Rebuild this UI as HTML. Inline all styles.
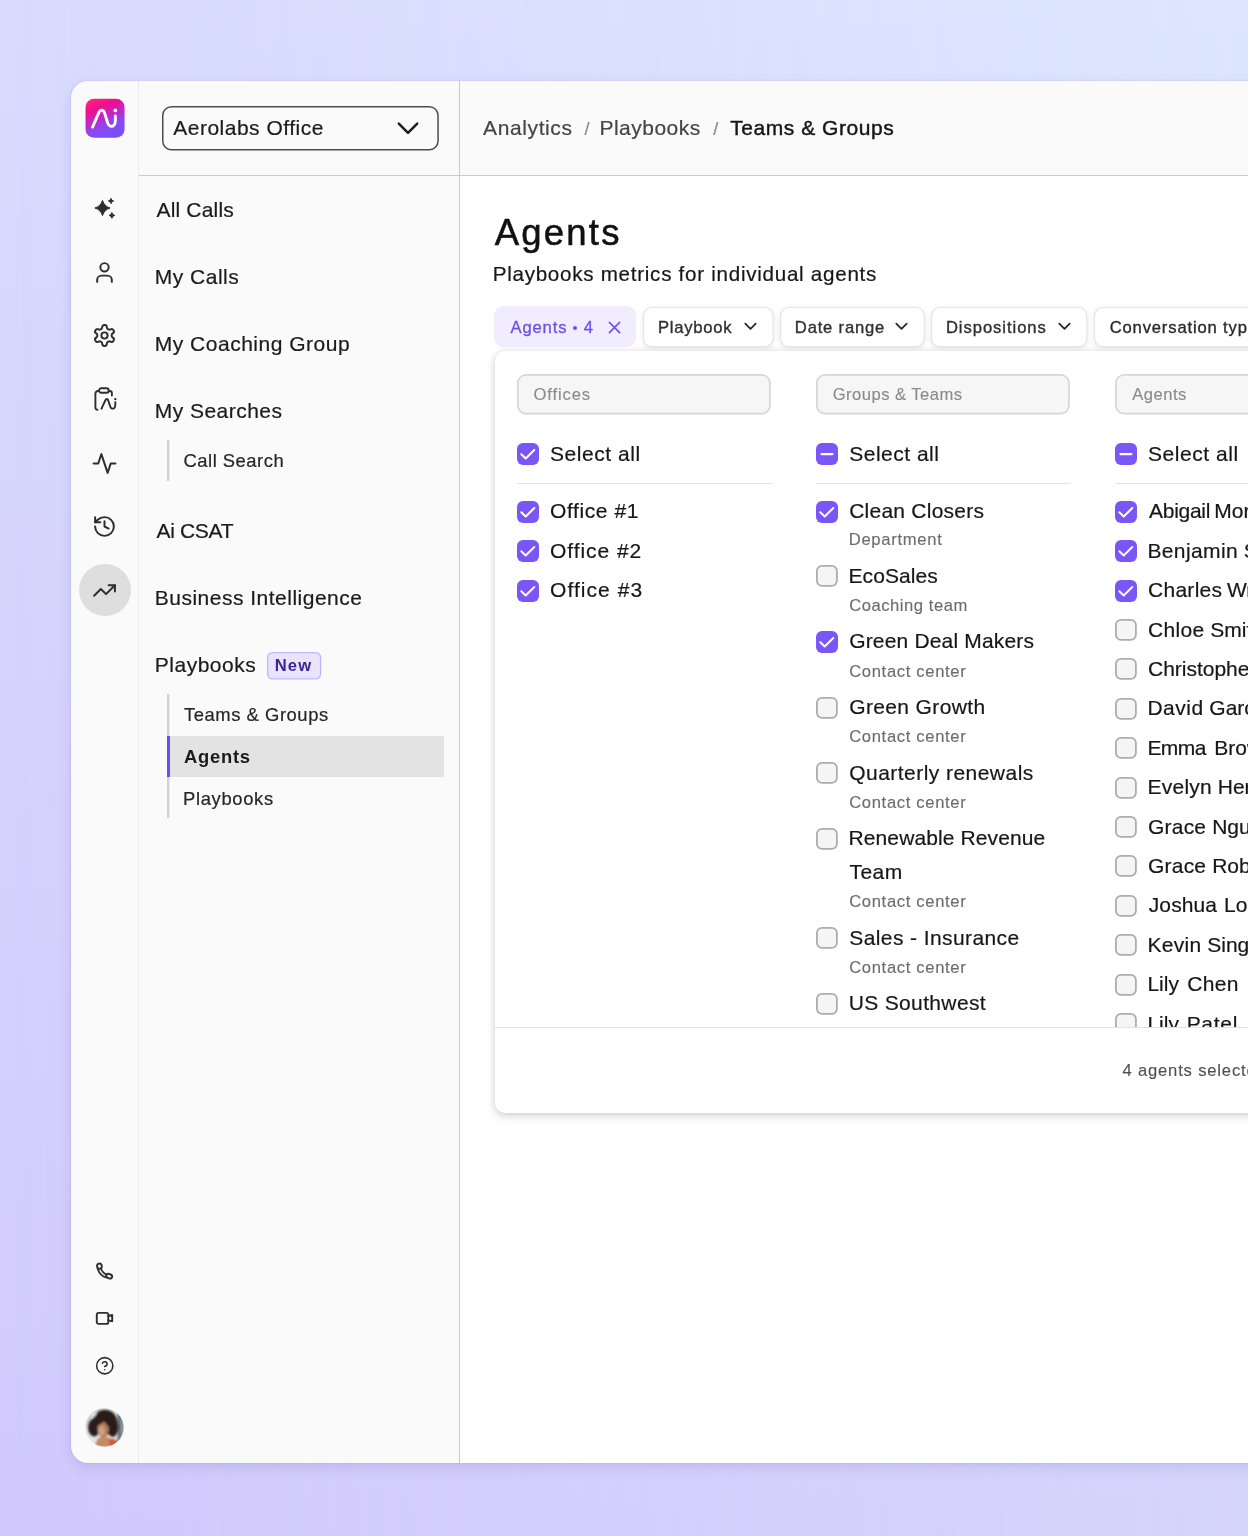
<!DOCTYPE html>
<html lang="en">
<head>
<meta charset="utf-8">
<title>Agents – Playbooks</title>
<style>
*{box-sizing:border-box;margin:0;padding:0}
html,body{width:1248px;height:1536px;overflow:hidden}
body{position:relative;font-family:"Liberation Sans",sans-serif;color:#1c1c1c;background:linear-gradient(to bottom,#d9dbfd 0%,#d5d2fd 50%,#d2c9fc 100%)}
.bg2{position:absolute;left:0;top:0;width:1248px;height:1536px;background:linear-gradient(to bottom,#dde6fe 0%,#d9dcfd 50%,#d5d4fc 100%);-webkit-mask-image:linear-gradient(to right,transparent 0%,#000 100%);mask-image:linear-gradient(to right,transparent 0%,#000 100%)}
.win{position:absolute;left:70.5px;top:80.5px;width:1300px;height:1382px;background:#fafafa;border-radius:17px;box-shadow:0 5px 13px rgba(70,60,150,.13),0 0 3px rgba(70,60,150,.13);overflow:hidden}
.abs{position:absolute}
.t{position:absolute;white-space:nowrap;line-height:24px;font-size:20px}
.vline{position:absolute;width:1px;background:#dcdcdc}
.hline{position:absolute;height:1px;background:#cbcbcb}
svg{position:absolute;overflow:visible}
.ic{fill:none;stroke:#2e2e2e;stroke-width:1.9;stroke-linecap:round;stroke-linejoin:round}
</style>
</head>
<body>
<div class="bg2"></div>
<div id="L" style="position:absolute;left:0;top:0;width:1248px;height:1536px;overflow:hidden;will-change:transform">
<div class="win"></div>

<!-- structural lines -->
<div class="vline" style="left:138px;top:81px;height:1382px;background:#eaeaea"></div>
<div class="vline" style="left:459px;top:81px;height:1382px;background:#c9c9c9"></div>
<div class="hline" style="left:139px;top:175px;width:1110px"></div>
<div class="abs" style="left:460px;top:176px;width:800px;height:1286.5px;background:#fff"></div>

<!--RAIL-->
<!-- logo -->
<svg style="left:85px;top:98px" width="39" height="39" viewBox="-0.55 -0.7 39 39">
  <defs>
    <linearGradient id="lg" x1="0.2" y1="0" x2="0.62" y2="1">
      <stop offset="0" stop-color="#ff2272"/>
      <stop offset="0.25" stop-color="#ee0f93"/>
      <stop offset="0.5" stop-color="#c128c4"/>
      <stop offset="0.72" stop-color="#8a48f2"/>
      <stop offset="1" stop-color="#7650fb"/>
    </linearGradient>
  </defs>
  <rect x="0" y="0" width="39" height="39" rx="8.5" fill="url(#lg)"/>
  <path d="M7 28.4 L13.4 13.6 C14.7 10.7 17.9 10.8 18.9 13.9 L22.2 24.4 C23.2 27.7 26.4 28.6 28.4 26.5 C29.5 25.3 29.8 23.8 29.8 21.8 L29.8 17.2" fill="none" stroke="#fff" stroke-width="2.9" stroke-linecap="round" stroke-linejoin="round"/>
  <circle cx="29.8" cy="11.7" r="1.85" fill="#fff"/>
</svg>

<!-- sparkles -->
<svg style="left:93px;top:197px" width="24" height="23" viewBox="0 0 24 23">
  <path d="M9.5 3.4000000000000004 Q11.2 9.3 17.1 11 Q11.2 12.7 9.5 18.6 Q7.8 12.7 1.9000000000000004 11 Q7.8 9.3 9.5 3.4000000000000004Z" fill="#2d2d2d" stroke="#2d2d2d" stroke-width="1" stroke-linejoin="round"/>
  <path d="M18 1.2999999999999998 Q18.35 3.65 20.7 4 Q18.35 4.35 18 6.7 Q17.65 4.35 15.3 4 Q17.65 3.65 18 1.2999999999999998Z" fill="#2d2d2d" stroke="#2d2d2d" stroke-width=".9" stroke-linejoin="round"/>
  <path d="M18.9 15.499999999999998 Q19.349999999999998 17.95 21.799999999999997 18.4 Q19.349999999999998 18.849999999999998 18.9 21.299999999999997 Q18.45 18.849999999999998 15.999999999999998 18.4 Q18.45 17.95 18.9 15.499999999999998Z" fill="#2d2d2d" stroke="#2d2d2d" stroke-width=".9" stroke-linejoin="round"/>
</svg>

<!-- user -->
<svg class="ic" style="left:92px;top:259.5px" width="25" height="25" viewBox="0 0 24 24"><path d="M19 21v-2a4 4 0 0 0-4-4H9a4 4 0 0 0-4 4v2"/><circle cx="12" cy="7" r="4"/></svg>

<!-- settings -->
<svg class="ic" style="left:92px;top:323px" width="25" height="25" viewBox="0 0 24 24"><path d="M12.22 2h-.44a2 2 0 0 0-2 2v.18a2 2 0 0 1-1 1.73l-.43.25a2 2 0 0 1-2 0l-.15-.08a2 2 0 0 0-2.73.73l-.22.38a2 2 0 0 0 .73 2.73l.15.1a2 2 0 0 1 1 1.72v.51a2 2 0 0 1-1 1.74l-.15.09a2 2 0 0 0-.73 2.73l.22.38a2 2 0 0 0 2.73.73l.15-.08a2 2 0 0 1 2 0l.43.25a2 2 0 0 1 1 1.73V20a2 2 0 0 0 2 2h.44a2 2 0 0 0 2-2v-.18a2 2 0 0 1 1-1.73l.43-.25a2 2 0 0 1 2 0l.15.08a2 2 0 0 0 2.73-.73l.22-.39a2 2 0 0 0-.73-2.73l-.15-.08a2 2 0 0 1-1-1.74v-.5a2 2 0 0 1 1-1.74l.15-.09a2 2 0 0 0 .73-2.73l-.22-.38a2 2 0 0 0-2.73-.73l-.15.08a2 2 0 0 1-2 0l-.43-.25a2 2 0 0 1-1-1.73V4a2 2 0 0 0-2-2z"/><circle cx="12" cy="12" r="3"/></svg>

<!-- clipboard / Ai scorecard -->
<svg class="ic" style="left:93px;top:386px" width="26" height="26" viewBox="0 0 26 26">
  <rect x="6.1" y="2.3" width="9.6" height="4.5" rx="2.1"/>
  <path d="M6.1 5 H5 A2.6 2.6 0 0 0 2.4 7.6 V21.6 C2.4 22.8 3.2 23.7 4.5 23.9"/>
  <path d="M15.7 5 H16.6 A2.3 2.3 0 0 1 18.9 7.3 V9.6"/>
  <path d="M8.5 22.7 L12.5 14 C13.1 12.6 14.6 12.6 15.1 14.1 L17.3 20.8 C18 22.9 20.2 23.2 21.4 21.8 C22.1 21 22.3 20 22.3 18.8 V16.2"/>
  <circle cx="22.3" cy="13.1" r="1.2" fill="#2e2e2e" stroke="none"/>
</svg>

<!-- activity -->
<svg class="ic" style="left:92px;top:450.5px" width="25" height="25" viewBox="0 0 24 24"><polyline points="22.5 12 18 12 15 21 9 3 6 12 1.5 12"/></svg>

<!-- history -->
<svg class="ic" style="left:91.5px;top:514px" width="25" height="25" viewBox="0 0 24 24"><path d="M3 12a9 9 0 1 0 9-9 9.75 9.75 0 0 0-6.74 2.74L3 8"/><path d="M3 3v5h5"/><path d="M12 7v5l4 2"/></svg>

<!-- active: trending-up -->
<div class="abs" style="left:78.5px;top:564px;width:52px;height:52px;border-radius:50%;background:#dedede"></div>
<svg class="ic" style="left:92px;top:577.5px" width="25" height="25" viewBox="0 0 24 24"><polyline points="22 7 13.5 15.5 8.5 10.5 2 17"/><polyline points="16 7 22 7 22 13"/></svg>

<!-- phone -->
<svg class="ic" style="left:94px;top:1261px" width="22" height="20" viewBox="0 0 22 20" stroke-width="1.75">
  <ellipse cx="5.45" cy="5.2" rx="2.35" ry="2.65" transform="rotate(-12 5.45 5.2)"/>
  <ellipse cx="15.2" cy="15.2" rx="3.05" ry="2.1" transform="rotate(22 15.2 15.2)"/>
  <path d="M3.6 7.2 C4.6 11.6 8.2 15.4 12.6 16.6" stroke-width="1.75"/>
  <path d="M6.9 7.6 C7.6 9.8 9.6 12.2 12.3 13.6" stroke-width="1.75"/>
</svg>

<!-- video -->
<svg class="ic" style="left:94px;top:1308px" width="22" height="20" viewBox="0 0 22 20" stroke-width="1.8"><rect x="2.8" y="4.9" width="11.5" height="11" rx="1.7"/><path d="M14.3 8 L18.2 7 V13.3 L14.3 12.3"/></svg>

<!-- help -->
<svg class="ic" style="left:95px;top:1355.5px" width="19.5" height="19.5" viewBox="0 0 24 24" stroke-width="2.25"><circle cx="12" cy="12" r="10"/><path d="M9.09 9a3 3 0 0 1 5.83 1c0 2-3 3-3 3"/><path d="M12 17h.01"/></svg>

<!-- avatar -->
<svg style="left:85.2px;top:1407.8px" width="39" height="39" viewBox="0 0 39 39">
  <defs><clipPath id="av"><circle cx="19.5" cy="19.5" r="19.2"/></clipPath>
  <linearGradient id="avbg" x1="0" y1="0" x2="1" y2="1"><stop offset="0" stop-color="#aab2b6"/><stop offset=".3" stop-color="#e4e8ea"/><stop offset="1" stop-color="#dfe3e5"/></linearGradient>
  <filter id="bl" x="-20%" y="-20%" width="140%" height="140%"><feGaussianBlur stdDeviation="0.85"/></filter></defs>
  <g clip-path="url(#av)">
    <rect width="39" height="39" fill="url(#avbg)"/>
    <g filter="url(#bl)">
    <rect x="32" y="0" width="8" height="39" fill="#8f9ba1"/>
    <rect x="33.8" y="6" width="1.5" height="27" fill="#3f474d"/>
    <ellipse cx="20" cy="14.5" rx="12.5" ry="12.8" fill="#2a1c19"/>
    <ellipse cx="9.2" cy="19.5" rx="6.2" ry="9" fill="#2c1e1a"/>
    <ellipse cx="27.8" cy="19" rx="5.6" ry="10" fill="#2a1c19"/>
    <ellipse cx="8.5" cy="6.5" rx="3.2" ry="2" fill="#dfe4e6" transform="rotate(-35 8.5 6.5)"/>
    <path d="M10 39 C11 32 13.5 29 18 28.3 C24 28.3 27 31 28.5 39Z" fill="#c68a63"/>
    <path d="M23.5 31.5 C26.5 30 30.5 31 33 34 L30 39 H25Z" fill="#cf5c39"/>
    <ellipse cx="18.2" cy="21" rx="5.7" ry="8" fill="#b07b5d"/>
    <ellipse cx="16.6" cy="22.3" rx="3.1" ry="4.4" fill="#d3a07f"/>
    <path d="M12 17.5 C12.5 12 17 10.5 20.5 11.8 C23.5 13 24.5 15.5 24.3 19.5 C22 17 20.3 15 19 13.2 C17 15.5 14.5 17 12 17.5Z" fill="#2a1c19"/>
    <path d="M15.6 25.2 C17 26.4 19.3 26.4 20.6 25 C19.2 25.6 17 25.7 15.6 25.2Z" fill="#efe2da"/>
    </g>
  </g>
</svg>
<svg style="left:161.6px;top:105.9px;" width="276.8" height="44.5" viewBox="0 0 276.8 44.5"><rect x="0.75" y="0.75" width="275.3" height="43.0" rx="8.75" fill="#fafafa" stroke="#4d4d4d" stroke-width="1.5"/></svg>
<div class="t" style="left:173.21px;top:114.25px;font-size:21px;line-height:28px;letter-spacing:0.503px;color:#1b1b1b;-webkit-text-stroke:0.2px #1b1b1b;">Aerolabs Office</div>
<svg style="left:396px;top:120px" width="24" height="17" viewBox="0 0 24 17"><path d="M2.8 3.6 L12 12.8 L21.2 3.6" fill="none" stroke="#1b1b1b" stroke-width="2.5" stroke-linecap="round" stroke-linejoin="round"/></svg>
<div class="t" style="left:156.46px;top:195.50px;font-size:21px;line-height:28px;letter-spacing:0.181px;color:#1b1b1b;-webkit-text-stroke:0.2px #1b1b1b;">All Calls</div>
<div class="t" style="left:154.78px;top:263.00px;font-size:21px;line-height:28px;letter-spacing:0.495px;color:#1b1b1b;-webkit-text-stroke:0.2px #1b1b1b;">My Calls</div>
<div class="t" style="left:154.78px;top:330.25px;font-size:21px;line-height:28px;letter-spacing:0.506px;color:#1b1b1b;-webkit-text-stroke:0.2px #1b1b1b;">My Coaching Group</div>
<div class="t" style="left:154.78px;top:397.25px;font-size:21px;line-height:28px;letter-spacing:0.469px;color:#1b1b1b;-webkit-text-stroke:0.2px #1b1b1b;">My Searches</div>
<div class="t" style="left:156.46px;top:516.75px;font-size:21px;line-height:28px;letter-spacing:-0.323px;color:#1b1b1b;-webkit-text-stroke:0.2px #1b1b1b;">Ai CSAT</div>
<div class="t" style="left:154.78px;top:584.25px;font-size:21px;line-height:28px;letter-spacing:0.494px;color:#1b1b1b;-webkit-text-stroke:0.2px #1b1b1b;">Business Intelligence</div>
<div class="t" style="left:154.78px;top:651.00px;font-size:21px;line-height:28px;letter-spacing:0.510px;color:#1b1b1b;-webkit-text-stroke:0.2px #1b1b1b;">Playbooks</div>
<div class="abs" style="left:167px;top:440px;width:2px;height:41.3px;background:#d1d1d1"></div>
<div class="abs" style="left:169px;top:440px;width:1px;height:41.3px;background:#ececec"></div>
<div class="t" style="left:183.56px;top:449.00px;font-size:18.4px;line-height:24px;letter-spacing:0.502px;color:#262626;-webkit-text-stroke:0.2px #262626;">Call Search</div>
<div class="abs" style="left:167px;top:693.75px;width:2px;height:124.3px;background:#d1d1d1"></div>
<div class="abs" style="left:169px;top:693.75px;width:1px;height:124.3px;background:#ececec"></div>
<div class="abs" style="left:167px;top:735.75px;width:276.75px;height:41.25px;background:#e3e3e3"></div>
<div class="abs" style="left:167px;top:735.75px;width:3px;height:41.25px;background:#6a4df0"></div>
<div class="t" style="left:184.10px;top:703.25px;font-size:18.4px;line-height:24px;letter-spacing:0.542px;color:#262626;-webkit-text-stroke:0.2px #262626;">Teams &amp; Groups</div>
<div class="t" style="left:184.04px;top:744.50px;font-size:18.4px;line-height:24px;letter-spacing:0.721px;color:#1b1b1b;font-weight:700;">Agents</div>
<div class="t" style="left:182.99px;top:786.50px;font-size:18.4px;line-height:24px;letter-spacing:0.659px;color:#262626;-webkit-text-stroke:0.2px #262626;">Playbooks</div>
<svg style="left:267px;top:652px;" width="54.25" height="27.5" viewBox="0 0 54.25 27.5"><rect x="0.65" y="0.65" width="52.95" height="26.2" rx="4.85" fill="#e9e3fc" stroke="#c3b5f7" stroke-width="1.3"/></svg>
<div class="t" style="left:274.64px;top:654.75px;font-size:16.6px;line-height:22px;letter-spacing:1.225px;color:#38288f;font-weight:700;">New</div>

<div class="t" style="left:483.06px;top:113.50px;font-size:21px;line-height:28px;letter-spacing:0.610px;color:#454545;-webkit-text-stroke:0.2px #454545;">Analytics</div>
<div class="t" style="left:584.60px;top:117.00px;font-size:18px;line-height:24px;letter-spacing:0.000px;color:#8a8a8a;-webkit-text-stroke:0.2px #8a8a8a;">/</div>
<div class="t" style="left:599.48px;top:113.50px;font-size:21px;line-height:28px;letter-spacing:0.485px;color:#454545;-webkit-text-stroke:0.2px #454545;">Playbooks</div>
<div class="t" style="left:713.20px;top:117.00px;font-size:18px;line-height:24px;letter-spacing:0.000px;color:#8a8a8a;-webkit-text-stroke:0.2px #8a8a8a;">/</div>
<div class="t" style="left:730.14px;top:113.50px;font-size:21px;line-height:28px;letter-spacing:0.556px;color:#161616;-webkit-text-stroke:0.42px #161616;">Teams &amp; Groups</div>
<div class="t" style="left:494.63px;top:209.10px;font-size:36.5px;line-height:48px;letter-spacing:2.233px;color:#111;-webkit-text-stroke:0.55px #111;">Agents</div>
<div class="t" style="left:492.71px;top:260.20px;font-size:20.6px;line-height:27px;letter-spacing:0.727px;color:#161616;-webkit-text-stroke:0.2px #161616;">Playbooks metrics for individual agents</div>
<div class="abs" style="left:494.2px;top:306.2px;width:141.8px;height:41px;background:#f1edfe;border-radius:9px"></div>
<div class="t" style="left:510.47px;top:316.50px;font-size:16.6px;line-height:22px;letter-spacing:0.871px;color:#6d50e6;-webkit-text-stroke:0.3px #6d50e6;">Agents</div>
<div class="abs" style="left:572.5px;top:326.1px;width:4.1px;height:4.1px;background:#6d50e6;border-radius:50%"></div>
<div class="t" style="left:583.82px;top:316.50px;font-size:16.6px;line-height:22px;letter-spacing:0.000px;color:#6d50e6;-webkit-text-stroke:0.3px #6d50e6;">4</div>
<svg style="left:607.5px;top:320.6px" width="13" height="13" viewBox="0 0 13 13"><path d="M1.4 1.4 L11.6 11.6 M11.6 1.4 L1.4 11.6" fill="none" stroke="#6d50e6" stroke-width="1.6" stroke-linecap="round"/></svg>
<svg style="left:642.8px;top:306.6px;filter:drop-shadow(0 1px 2.5px rgba(0,0,0,.10));" width="130.6" height="40.3" viewBox="0 0 130.6 40.3"><rect x="0.55" y="0.55" width="129.5" height="39.199999999999996" rx="8.45" fill="#fff" stroke="#e4e4e4" stroke-width="1.1"/></svg>
<div class="t" style="left:658.04px;top:316.50px;font-size:16.6px;line-height:22px;letter-spacing:0.765px;color:#2f2f2f;-webkit-text-stroke:0.35px #2f2f2f;">Playbook</div>
<svg style="left:744.3px;top:322.2px" width="13" height="9" viewBox="0 0 13 9"><path d="M1.3 1.6 L6.5 6.9 L11.7 1.6" fill="none" stroke="#2a2a2a" stroke-width="1.8" stroke-linecap="round" stroke-linejoin="round"/></svg>
<svg style="left:779.6px;top:306.6px;filter:drop-shadow(0 1px 2.5px rgba(0,0,0,.10));" width="144.8" height="40.3" viewBox="0 0 144.8 40.3"><rect x="0.55" y="0.55" width="143.70000000000002" height="39.199999999999996" rx="8.45" fill="#fff" stroke="#e4e4e4" stroke-width="1.1"/></svg>
<div class="t" style="left:794.84px;top:316.50px;font-size:16.6px;line-height:22px;letter-spacing:0.817px;color:#2f2f2f;-webkit-text-stroke:0.35px #2f2f2f;">Date range</div>
<svg style="left:895.1px;top:322.2px" width="13" height="9" viewBox="0 0 13 9"><path d="M1.3 1.6 L6.5 6.9 L11.7 1.6" fill="none" stroke="#2a2a2a" stroke-width="1.8" stroke-linecap="round" stroke-linejoin="round"/></svg>
<svg style="left:930.8px;top:306.6px;filter:drop-shadow(0 1px 2.5px rgba(0,0,0,.10));" width="156.4" height="40.3" viewBox="0 0 156.4 40.3"><rect x="0.55" y="0.55" width="155.3" height="39.199999999999996" rx="8.45" fill="#fff" stroke="#e4e4e4" stroke-width="1.1"/></svg>
<div class="t" style="left:945.89px;top:316.50px;font-size:16.6px;line-height:22px;letter-spacing:0.952px;color:#2f2f2f;-webkit-text-stroke:0.35px #2f2f2f;">Dispositions</div>
<svg style="left:1058.2px;top:322.2px" width="13" height="9" viewBox="0 0 13 9"><path d="M1.3 1.6 L6.5 6.9 L11.7 1.6" fill="none" stroke="#2a2a2a" stroke-width="1.8" stroke-linecap="round" stroke-linejoin="round"/></svg>
<svg style="left:1094px;top:306.6px;filter:drop-shadow(0 1px 2.5px rgba(0,0,0,.10));" width="200" height="40.3" viewBox="0 0 200 40.3"><rect x="0.55" y="0.55" width="198.9" height="39.199999999999996" rx="8.45" fill="#fff" stroke="#e4e4e4" stroke-width="1.1"/></svg>
<div class="t" style="left:1109.65px;top:316.50px;font-size:16.6px;line-height:22px;letter-spacing:0.000px;color:#2a2a2a;-webkit-text-stroke:0.35px #2a2a2a;letter-spacing:0.852px;">Conversation type</div>
<div class="abs" style="left:494.6px;top:351px;width:800px;height:762.3px;background:#fff;border-radius:10px;box-shadow:0 4px 10px rgba(0,0,0,.13),0 0 7px rgba(0,0,0,.10)"></div>
<div class="abs" style="left:494.5px;top:1027px;width:800px;height:1px;background:#e3e3e3"></div>
<div class="t" style="left:1122.42px;top:1059.70px;font-size:16.6px;line-height:22px;letter-spacing:0.000px;color:#515151;-webkit-text-stroke:0.14px #515151;letter-spacing:0.829px;">4 agents selected</div>
<svg style="left:517px;top:373.75px;" width="253.8" height="40.5" viewBox="0 0 253.8 40.5"><rect x="0.85" y="0.85" width="252.10000000000002" height="38.8" rx="8.15" fill="#f6f6f6" stroke="#d6d6d6" stroke-width="1.7"/></svg>
<div class="t" style="left:533.47px;top:383.50px;font-size:16.6px;line-height:22px;letter-spacing:0.878px;color:#8b8b8b;-webkit-text-stroke:0.14px #8b8b8b;">Offices</div>
<svg style="left:816.25px;top:373.75px;" width="253.8" height="40.5" viewBox="0 0 253.8 40.5"><rect x="0.85" y="0.85" width="252.10000000000002" height="38.8" rx="8.15" fill="#f6f6f6" stroke="#d6d6d6" stroke-width="1.7"/></svg>
<div class="t" style="left:832.67px;top:383.50px;font-size:16.6px;line-height:22px;letter-spacing:0.470px;color:#8b8b8b;-webkit-text-stroke:0.14px #8b8b8b;">Groups &amp; Teams</div>
<svg style="left:1115px;top:373.75px;" width="253.8" height="40.5" viewBox="0 0 253.8 40.5"><rect x="0.85" y="0.85" width="252.10000000000002" height="38.8" rx="8.15" fill="#f6f6f6" stroke="#d6d6d6" stroke-width="1.7"/></svg>
<div class="t" style="left:1132.22px;top:383.50px;font-size:16.6px;line-height:22px;letter-spacing:0.491px;color:#8b8b8b;-webkit-text-stroke:0.14px #8b8b8b;">Agents</div>
<div class="abs" style="left:517px;top:443.15px;width:22px;height:22px;background:#7a56f6;border-radius:6px"></div>
<svg style="left:517px;top:443.15px" width="22" height="22" viewBox="0 0 22 22"><path d="M4.3 11.2 L8.7 15.5 L17.3 7" fill="none" stroke="#fff" stroke-width="2" stroke-linecap="round" stroke-linejoin="round"/></svg>
<div class="t" style="left:550.03px;top:439.75px;font-size:21px;line-height:28px;letter-spacing:0.547px;color:#171717;-webkit-text-stroke:0.2px #171717;">Select all</div>
<div class="abs" style="left:816.25px;top:443.15px;width:22px;height:22px;background:#7a56f6;border-radius:6px"></div>
<svg style="left:816.25px;top:443.15px" width="22" height="22" viewBox="0 0 22 22"><path d="M5.5 11.1 H16.4" fill="none" stroke="#fff" stroke-width="2.3" stroke-linecap="round"/></svg>
<div class="t" style="left:849.28px;top:439.75px;font-size:21px;line-height:28px;letter-spacing:0.492px;color:#171717;-webkit-text-stroke:0.2px #171717;">Select all</div>
<div class="abs" style="left:1115px;top:443.15px;width:22px;height:22px;background:#7a56f6;border-radius:6px"></div>
<svg style="left:1115px;top:443.15px" width="22" height="22" viewBox="0 0 22 22"><path d="M5.5 11.1 H16.4" fill="none" stroke="#fff" stroke-width="2.3" stroke-linecap="round"/></svg>
<div class="t" style="left:1148.03px;top:439.75px;font-size:21px;line-height:28px;letter-spacing:0.542px;color:#171717;-webkit-text-stroke:0.2px #171717;">Select all</div>
<div class="abs" style="left:517px;top:482.6px;width:254.5px;height:1px;background:#e4e4e4"></div>
<div class="abs" style="left:816.25px;top:482.6px;width:254.5px;height:1px;background:#e4e4e4"></div>
<div class="abs" style="left:1115px;top:482.6px;width:254.5px;height:1px;background:#e4e4e4"></div>
<div class="abs" style="left:517px;top:500.65px;width:22px;height:22px;background:#7a56f6;border-radius:6px"></div>
<svg style="left:517px;top:500.65px" width="22" height="22" viewBox="0 0 22 22"><path d="M4.3 11.2 L8.7 15.5 L17.3 7" fill="none" stroke="#fff" stroke-width="2" stroke-linecap="round" stroke-linejoin="round"/></svg>
<div class="t" style="left:550.01px;top:497.25px;font-size:21px;line-height:28px;letter-spacing:0.606px;color:#171717;-webkit-text-stroke:0.2px #171717;">Office #1</div>
<div class="abs" style="left:517px;top:540.15px;width:22px;height:22px;background:#7a56f6;border-radius:6px"></div>
<svg style="left:517px;top:540.15px" width="22" height="22" viewBox="0 0 22 22"><path d="M4.3 11.2 L8.7 15.5 L17.3 7" fill="none" stroke="#fff" stroke-width="2" stroke-linecap="round" stroke-linejoin="round"/></svg>
<div class="t" style="left:550.01px;top:536.75px;font-size:21px;line-height:28px;letter-spacing:0.953px;color:#171717;-webkit-text-stroke:0.2px #171717;">Office #2</div>
<div class="abs" style="left:517px;top:579.5px;width:22px;height:22px;background:#7a56f6;border-radius:6px"></div>
<svg style="left:517px;top:579.5px" width="22" height="22" viewBox="0 0 22 22"><path d="M4.3 11.2 L8.7 15.5 L17.3 7" fill="none" stroke="#fff" stroke-width="2" stroke-linecap="round" stroke-linejoin="round"/></svg>
<div class="t" style="left:550.01px;top:576.10px;font-size:21px;line-height:28px;letter-spacing:1.062px;color:#171717;-webkit-text-stroke:0.2px #171717;">Office #3</div>
<div class="abs" style="left:816.25px;top:500.65px;width:22px;height:22px;background:#7a56f6;border-radius:6px"></div>
<svg style="left:816.25px;top:500.65px" width="22" height="22" viewBox="0 0 22 22"><path d="M4.3 11.2 L8.7 15.5 L17.3 7" fill="none" stroke="#fff" stroke-width="2" stroke-linecap="round" stroke-linejoin="round"/></svg>
<div class="t" style="left:849.18px;top:497.25px;font-size:21px;line-height:28px;letter-spacing:0.246px;color:#171717;-webkit-text-stroke:0.2px #171717;">Clean Closers</div>
<div class="t" style="left:848.69px;top:529.25px;font-size:16.6px;line-height:22px;letter-spacing:0.716px;color:#6c6c6c;-webkit-text-stroke:0.14px #6c6c6c;">Department</div>
<svg style="left:816.25px;top:565.4px;" width="21.8" height="21.8" viewBox="0 0 21.8 21.8"><rect x="0.9" y="0.9" width="20.0" height="20.0" rx="5.1" fill="#f5f5f5" stroke="#adadad" stroke-width="1.8"/></svg>
<div class="t" style="left:848.53px;top:561.90px;font-size:21px;line-height:28px;letter-spacing:0.072px;color:#171717;-webkit-text-stroke:0.2px #171717;">EcoSales</div>
<div class="t" style="left:849.20px;top:595.10px;font-size:16.6px;line-height:22px;letter-spacing:0.541px;color:#6c6c6c;-webkit-text-stroke:0.14px #6c6c6c;">Coaching team</div>
<div class="abs" style="left:816.25px;top:630.8px;width:22px;height:22px;background:#7a56f6;border-radius:6px"></div>
<svg style="left:816.25px;top:630.8px" width="22" height="22" viewBox="0 0 22 22"><path d="M4.3 11.2 L8.7 15.5 L17.3 7" fill="none" stroke="#fff" stroke-width="2" stroke-linecap="round" stroke-linejoin="round"/></svg>
<div class="t" style="left:849.20px;top:627.40px;font-size:21px;line-height:28px;letter-spacing:0.171px;color:#171717;-webkit-text-stroke:0.2px #171717;">Green Deal Makers</div>
<div class="t" style="left:849.20px;top:660.50px;font-size:16.6px;line-height:22px;letter-spacing:0.664px;color:#6c6c6c;-webkit-text-stroke:0.14px #6c6c6c;">Contact center</div>
<svg style="left:816.25px;top:696.5px;" width="21.8" height="21.8" viewBox="0 0 21.8 21.8"><rect x="0.9" y="0.9" width="20.0" height="20.0" rx="5.1" fill="#f5f5f5" stroke="#adadad" stroke-width="1.8"/></svg>
<div class="t" style="left:849.20px;top:693.00px;font-size:21px;line-height:28px;letter-spacing:0.367px;color:#171717;-webkit-text-stroke:0.2px #171717;">Green Growth</div>
<div class="t" style="left:849.20px;top:726.00px;font-size:16.6px;line-height:22px;letter-spacing:0.664px;color:#6c6c6c;-webkit-text-stroke:0.14px #6c6c6c;">Contact center</div>
<svg style="left:816.25px;top:762.0px;" width="21.8" height="21.8" viewBox="0 0 21.8 21.8"><rect x="0.9" y="0.9" width="20.0" height="20.0" rx="5.1" fill="#f5f5f5" stroke="#adadad" stroke-width="1.8"/></svg>
<div class="t" style="left:849.26px;top:758.50px;font-size:21px;line-height:28px;letter-spacing:0.457px;color:#171717;-webkit-text-stroke:0.2px #171717;">Quarterly renewals</div>
<div class="t" style="left:849.20px;top:791.50px;font-size:16.6px;line-height:22px;letter-spacing:0.664px;color:#6c6c6c;-webkit-text-stroke:0.14px #6c6c6c;">Contact center</div>
<svg style="left:816.25px;top:827.5px;" width="21.8" height="21.8" viewBox="0 0 21.8 21.8"><rect x="0.9" y="0.9" width="20.0" height="20.0" rx="5.1" fill="#f5f5f5" stroke="#adadad" stroke-width="1.8"/></svg>
<div class="t" style="left:848.53px;top:824.00px;font-size:21px;line-height:28px;letter-spacing:0.105px;color:#171717;-webkit-text-stroke:0.2px #171717;">Renewable Revenue</div>
<div class="t" style="left:849.54px;top:858.00px;font-size:21px;line-height:28px;letter-spacing:0.418px;color:#171717;-webkit-text-stroke:0.2px #171717;">Team</div>
<div class="t" style="left:849.20px;top:891.00px;font-size:16.6px;line-height:22px;letter-spacing:0.664px;color:#6c6c6c;-webkit-text-stroke:0.14px #6c6c6c;">Contact center</div>
<svg style="left:816.25px;top:927.0px;" width="21.8" height="21.8" viewBox="0 0 21.8 21.8"><rect x="0.9" y="0.9" width="20.0" height="20.0" rx="5.1" fill="#f5f5f5" stroke="#adadad" stroke-width="1.8"/></svg>
<div class="t" style="left:849.28px;top:923.50px;font-size:21px;line-height:28px;letter-spacing:0.404px;color:#171717;-webkit-text-stroke:0.2px #171717;">Sales - Insurance</div>
<div class="t" style="left:849.20px;top:956.50px;font-size:16.6px;line-height:22px;letter-spacing:0.664px;color:#6c6c6c;-webkit-text-stroke:0.14px #6c6c6c;">Contact center</div>
<svg style="left:816.25px;top:992.5px;" width="21.8" height="21.8" viewBox="0 0 21.8 21.8"><rect x="0.9" y="0.9" width="20.0" height="20.0" rx="5.1" fill="#f5f5f5" stroke="#adadad" stroke-width="1.8"/></svg>
<div class="t" style="left:848.63px;top:989.00px;font-size:21px;line-height:28px;letter-spacing:0.358px;color:#171717;-webkit-text-stroke:0.2px #171717;">US Southwest</div>
<div class="abs" style="left:1115px;top:500.69999999999993px;width:22px;height:22px;background:#7a56f6;border-radius:6px"></div>
<svg style="left:1115px;top:500.69999999999993px" width="22" height="22" viewBox="0 0 22 22"><path d="M4.3 11.2 L8.7 15.5 L17.3 7" fill="none" stroke="#fff" stroke-width="2" stroke-linecap="round" stroke-linejoin="round"/></svg>
<div class="t" style="left:1149.06px;top:497.30px;font-size:21px;line-height:28px;letter-spacing:-0.282px;color:#171717;-webkit-text-stroke:0.2px #171717;">Abigail</div>
<div class="t" style="left:1214.28px;top:497.30px;font-size:21px;line-height:28px;letter-spacing:0.000px;color:#171717;-webkit-text-stroke:0.2px #171717;">Morgan</div>
<div class="abs" style="left:1115px;top:540.0999999999999px;width:22px;height:22px;background:#7a56f6;border-radius:6px"></div>
<svg style="left:1115px;top:540.0999999999999px" width="22" height="22" viewBox="0 0 22 22"><path d="M4.3 11.2 L8.7 15.5 L17.3 7" fill="none" stroke="#fff" stroke-width="2" stroke-linecap="round" stroke-linejoin="round"/></svg>
<div class="t" style="left:1147.38px;top:536.70px;font-size:21px;line-height:28px;letter-spacing:0.405px;color:#171717;-webkit-text-stroke:0.2px #171717;">Benjamin</div>
<div class="t" style="left:1243.73px;top:536.70px;font-size:21px;line-height:28px;letter-spacing:0.000px;color:#171717;-webkit-text-stroke:0.2px #171717;">Scott</div>
<div class="abs" style="left:1115px;top:579.4999999999999px;width:22px;height:22px;background:#7a56f6;border-radius:6px"></div>
<svg style="left:1115px;top:579.4999999999999px" width="22" height="22" viewBox="0 0 22 22"><path d="M4.3 11.2 L8.7 15.5 L17.3 7" fill="none" stroke="#fff" stroke-width="2" stroke-linecap="round" stroke-linejoin="round"/></svg>
<div class="t" style="left:1148.03px;top:576.10px;font-size:21px;line-height:28px;letter-spacing:0.277px;color:#171717;-webkit-text-stroke:0.2px #171717;">Charles</div>
<div class="t" style="left:1226.89px;top:576.10px;font-size:21px;line-height:28px;letter-spacing:0.000px;color:#171717;-webkit-text-stroke:0.2px #171717;">Wright</div>
<svg style="left:1115px;top:619.0px;" width="21.8" height="21.8" viewBox="0 0 21.8 21.8"><rect x="0.9" y="0.9" width="20.0" height="20.0" rx="5.1" fill="#f5f5f5" stroke="#adadad" stroke-width="1.8"/></svg>
<div class="t" style="left:1148.03px;top:615.50px;font-size:21px;line-height:28px;letter-spacing:0.331px;color:#171717;-webkit-text-stroke:0.2px #171717;">Chloe</div>
<div class="t" style="left:1210.23px;top:615.50px;font-size:21px;line-height:28px;letter-spacing:0.000px;color:#171717;-webkit-text-stroke:0.2px #171717;">Smith</div>
<svg style="left:1115px;top:658.4px;" width="21.8" height="21.8" viewBox="0 0 21.8 21.8"><rect x="0.9" y="0.9" width="20.0" height="20.0" rx="5.1" fill="#f5f5f5" stroke="#adadad" stroke-width="1.8"/></svg>
<div class="t" style="left:1148.03px;top:654.90px;font-size:21px;line-height:28px;letter-spacing:0.000px;color:#171717;-webkit-text-stroke:0.2px #171717;letter-spacing:-0.018px;">Christopher Lee</div>
<svg style="left:1115px;top:697.8px;" width="21.8" height="21.8" viewBox="0 0 21.8 21.8"><rect x="0.9" y="0.9" width="20.0" height="20.0" rx="5.1" fill="#f5f5f5" stroke="#adadad" stroke-width="1.8"/></svg>
<div class="t" style="left:1147.38px;top:694.30px;font-size:21px;line-height:28px;letter-spacing:0.542px;color:#171717;-webkit-text-stroke:0.2px #171717;">David</div>
<div class="t" style="left:1209.35px;top:694.30px;font-size:21px;line-height:28px;letter-spacing:0.000px;color:#171717;-webkit-text-stroke:0.2px #171717;">Garcia</div>
<svg style="left:1115px;top:737.1999999999999px;" width="21.8" height="21.8" viewBox="0 0 21.8 21.8"><rect x="0.9" y="0.9" width="20.0" height="20.0" rx="5.1" fill="#f5f5f5" stroke="#adadad" stroke-width="1.8"/></svg>
<div class="t" style="left:1147.38px;top:733.70px;font-size:21px;line-height:28px;letter-spacing:-0.516px;color:#171717;-webkit-text-stroke:0.2px #171717;">Emma</div>
<div class="t" style="left:1214.28px;top:733.70px;font-size:21px;line-height:28px;letter-spacing:0.000px;color:#171717;-webkit-text-stroke:0.2px #171717;">Brown</div>
<svg style="left:1115px;top:776.5999999999999px;" width="21.8" height="21.8" viewBox="0 0 21.8 21.8"><rect x="0.9" y="0.9" width="20.0" height="20.0" rx="5.1" fill="#f5f5f5" stroke="#adadad" stroke-width="1.8"/></svg>
<div class="t" style="left:1147.38px;top:773.10px;font-size:21px;line-height:28px;letter-spacing:0.273px;color:#171717;-webkit-text-stroke:0.2px #171717;">Evelyn</div>
<div class="t" style="left:1217.78px;top:773.10px;font-size:21px;line-height:28px;letter-spacing:0.000px;color:#171717;-webkit-text-stroke:0.2px #171717;">Hernandez</div>
<svg style="left:1115px;top:816.0px;" width="21.8" height="21.8" viewBox="0 0 21.8 21.8"><rect x="0.9" y="0.9" width="20.0" height="20.0" rx="5.1" fill="#f5f5f5" stroke="#adadad" stroke-width="1.8"/></svg>
<div class="t" style="left:1148.05px;top:812.50px;font-size:21px;line-height:28px;letter-spacing:0.198px;color:#171717;-webkit-text-stroke:0.2px #171717;">Grace</div>
<div class="t" style="left:1212.18px;top:812.50px;font-size:21px;line-height:28px;letter-spacing:0.000px;color:#171717;-webkit-text-stroke:0.2px #171717;">Nguyen</div>
<svg style="left:1115px;top:855.3999999999999px;" width="21.8" height="21.8" viewBox="0 0 21.8 21.8"><rect x="0.9" y="0.9" width="20.0" height="20.0" rx="5.1" fill="#f5f5f5" stroke="#adadad" stroke-width="1.8"/></svg>
<div class="t" style="left:1148.05px;top:851.90px;font-size:21px;line-height:28px;letter-spacing:0.198px;color:#171717;-webkit-text-stroke:0.2px #171717;">Grace</div>
<div class="t" style="left:1212.18px;top:851.90px;font-size:21px;line-height:28px;letter-spacing:0.000px;color:#171717;-webkit-text-stroke:0.2px #171717;">Robinson</div>
<svg style="left:1115px;top:894.8px;" width="21.8" height="21.8" viewBox="0 0 21.8 21.8"><rect x="0.9" y="0.9" width="20.0" height="20.0" rx="5.1" fill="#f5f5f5" stroke="#adadad" stroke-width="1.8"/></svg>
<div class="t" style="left:1148.76px;top:891.30px;font-size:21px;line-height:28px;letter-spacing:0.106px;color:#171717;-webkit-text-stroke:0.2px #171717;">Joshua</div>
<div class="t" style="left:1223.98px;top:891.30px;font-size:21px;line-height:28px;letter-spacing:0.000px;color:#171717;-webkit-text-stroke:0.2px #171717;">Lopez</div>
<svg style="left:1115px;top:934.1999999999999px;" width="21.8" height="21.8" viewBox="0 0 21.8 21.8"><rect x="0.9" y="0.9" width="20.0" height="20.0" rx="5.1" fill="#f5f5f5" stroke="#adadad" stroke-width="1.8"/></svg>
<div class="t" style="left:1147.38px;top:930.70px;font-size:21px;line-height:28px;letter-spacing:0.317px;color:#171717;-webkit-text-stroke:0.2px #171717;">Kevin</div>
<div class="t" style="left:1207.23px;top:930.70px;font-size:21px;line-height:28px;letter-spacing:0.000px;color:#171717;-webkit-text-stroke:0.2px #171717;">Singh</div>
<svg style="left:1115px;top:973.5999999999999px;" width="21.8" height="21.8" viewBox="0 0 21.8 21.8"><rect x="0.9" y="0.9" width="20.0" height="20.0" rx="5.1" fill="#f5f5f5" stroke="#adadad" stroke-width="1.8"/></svg>
<div class="t" style="left:1147.38px;top:970.10px;font-size:21px;line-height:28px;letter-spacing:0.048px;color:#171717;-webkit-text-stroke:0.2px #171717;">Lily</div>
<div class="t" style="left:1187.33px;top:970.10px;font-size:21px;line-height:28px;letter-spacing:0.315px;color:#171717;-webkit-text-stroke:0.2px #171717;">Chen</div>
<div class="abs" style="left:1100px;top:1000px;width:160px;height:27px;overflow:hidden"><div style="position:absolute;left:-1100px;top:-1000px"><svg style="left:1115px;top:1013.0px;" width="21.8" height="21.8" viewBox="0 0 21.8 21.8"><rect x="0.9" y="0.9" width="20.0" height="20.0" rx="5.1" fill="#f5f5f5" stroke="#adadad" stroke-width="1.8"/></svg>
<div class="t" style="left:1147.38px;top:1009.50px;font-size:21px;line-height:28px;letter-spacing:0.048px;color:#171717;-webkit-text-stroke:0.2px #171717;">Lily</div>
<div class="t" style="left:1186.68px;top:1009.50px;font-size:21px;line-height:28px;letter-spacing:0.692px;color:#171717;-webkit-text-stroke:0.2px #171717;">Patel</div>
</div></div>

</div>
</body>
</html>
